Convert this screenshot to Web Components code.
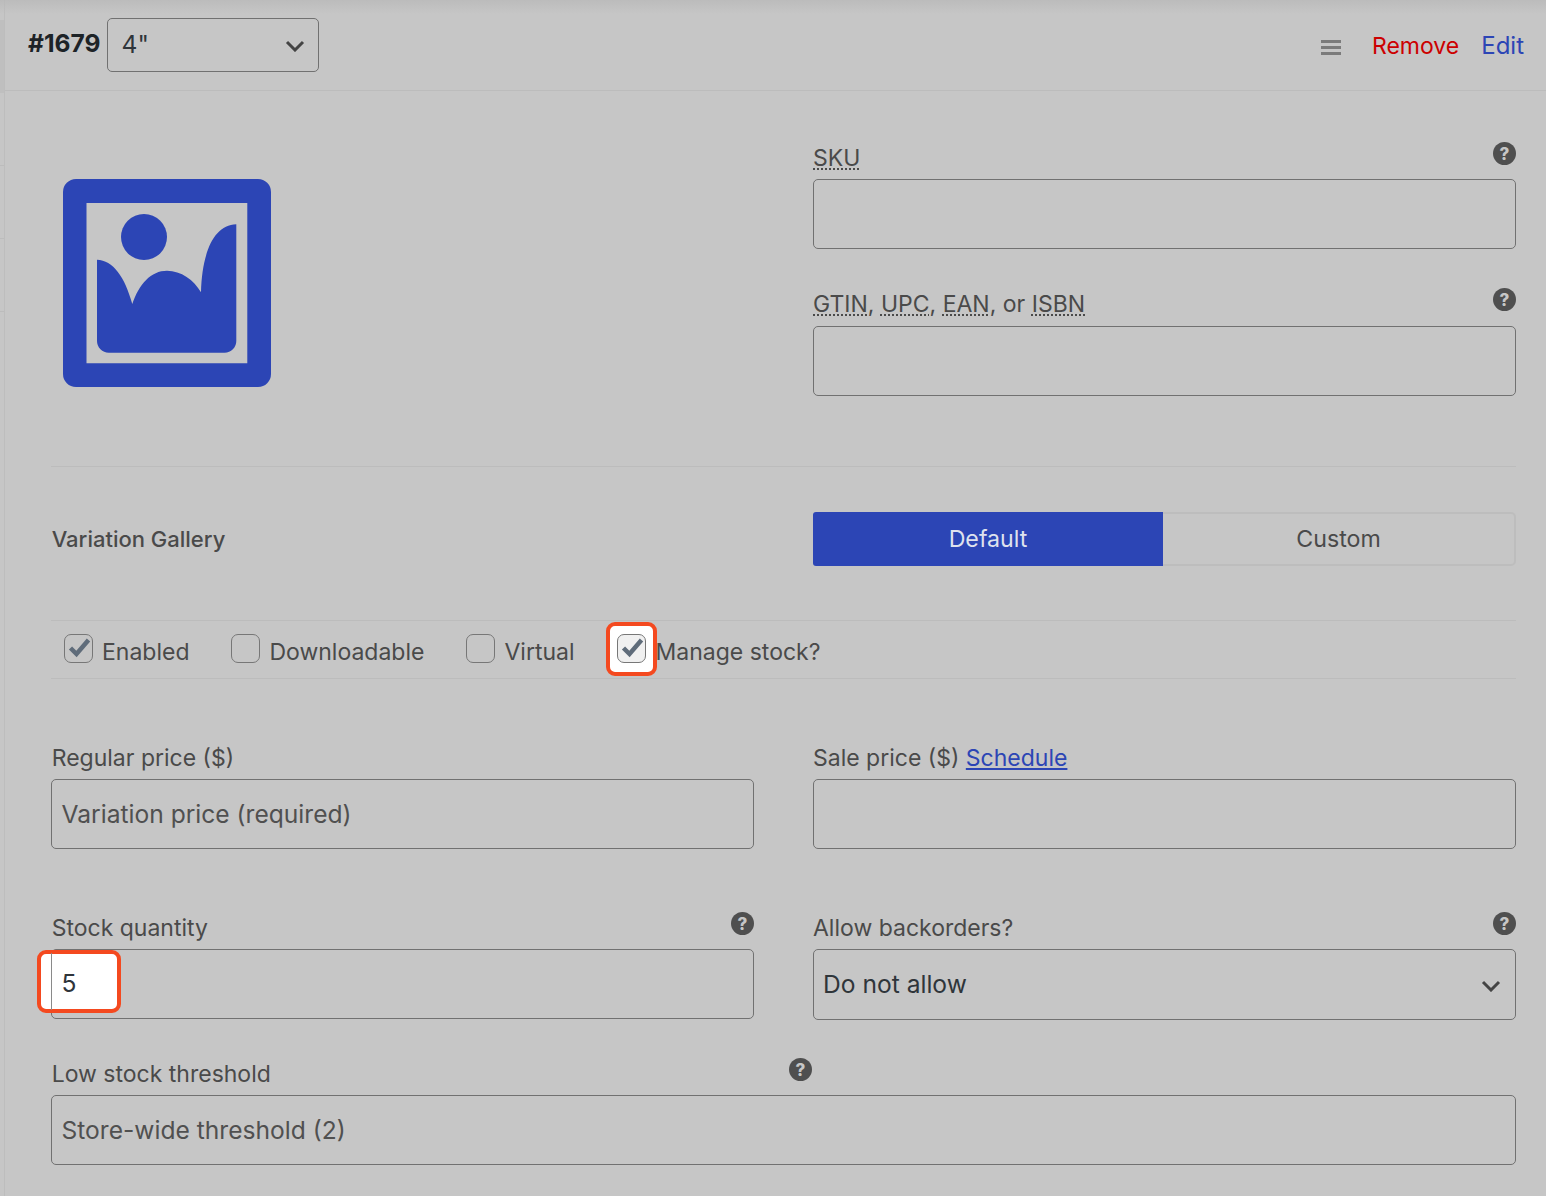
<!DOCTYPE html>
<html lang="en"><head><meta charset="utf-8"><title>Variation</title>
<style>
html,body{margin:0;padding:0;background:#c6c6c6}
body{font-family:Inter,"Noto Sans",sans-serif;font-size:23px;color:#4a4a4a;width:1546px;height:1196px;overflow:hidden}
</style></head><body>
<vg-app>
  <vg-header slot="header" num="#1679" value='4"'></vg-header>
  <vg-top slot="body"></vg-top>
  <vg-gallery slot="body"></vg-gallery>
  <vg-checks slot="body">
    <vg-check checked>Enabled</vg-check>
    <vg-check>Downloadable</vg-check>
    <vg-check>Virtual</vg-check>
    <vg-check checked highlight>Manage stock?</vg-check>
  </vg-checks>
  <vg-cols slot="body" style="margin-top:67px">
    <vg-field><span slot="label" style="margin-left:.7px">Regular price ($)</span><vg-input placeholder="Variation price (required)"></vg-input></vg-field>
    <vg-field><span slot="label">Sale price ($) <a href="#" style="color:#2c45b5;text-decoration:underline">Schedule</a></span><vg-input></vg-input></vg-field>
  </vg-cols>
  <vg-cols slot="body" style="margin-top:67px">
    <vg-field help><span slot="label" style="margin-left:.7px">Stock quantity</span><vg-input value="5" highlight></vg-input></vg-field>
    <vg-field help><span slot="label">Allow backorders?</span><vg-select tall value="Do not allow"></vg-select></vg-field>
  </vg-cols>
  <vg-field slot="body" help narrow style="margin-top:42px"><span slot="label" style="margin-left:.7px">Low stock threshold</span><vg-input placeholder="Store-wide threshold (2)"></vg-input></vg-field>
</vg-app>
<script>
const def=(name,html)=>customElements.define(name,class extends HTMLElement{
  constructor(){super();this.attachShadow({mode:'open'}).innerHTML=html(this)}
});
const chev='<svg width="20" height="12" viewBox="0 0 20 12" fill="none"><path d="M2 2l8 8 8-8" stroke="#444" stroke-width="3"/></svg>';

def('vg-help',()=>`<style>:host{display:block;width:23px;height:23px;flex:none}svg{display:block}
text{font:800 17px Inter,sans-serif;fill:#c6c6c6}</style>
<svg width="23" height="23" viewBox="0 0 23 23"><circle cx="11.5" cy="11.5" r="11.5" fill="#4f4f4f"/><text x="11.5" y="17.6" text-anchor="middle">?</text></svg>`);

def('vg-app',()=>`<style>
:host{display:flex;width:1546px;height:1196px;position:relative;background:#c6c6c6}
.rail{width:4px;flex:none;border-right:1px solid #bdbdbd;display:flex;flex-direction:column}
.rail i{display:block;height:73px;border-bottom:1px solid #bcbcbc;box-sizing:border-box}
.rail i.first{height:20px;border:0}.rail i.act{background:#bfbfbf;border:0}
.main{flex:1;min-width:0}
.body{padding:0 30px 0 46px}
.shade{position:absolute;left:0;right:0;top:0;height:14px;background:linear-gradient(#b9b9b9cc,#c6c6c600);pointer-events:none}
</style>
<div class="rail"><i class="first"></i><i class="act"></i><i></i><i></i><i></i></div>
<div class="main"><slot name="header"></slot><div class="body"><slot name="body"></slot></div></div>
<div class="shade"></div>`);

def('vg-header',h=>`<style>
:host{display:flex;align-items:center;height:90px;border-bottom:1px solid #bcbcbc;padding:0 22px 0 23px;box-sizing:content-box}
.num{font-weight:700;font-size:24.6px;color:#1d2327;margin-right:6px;position:relative;top:-2px}
.sp{flex:1}
.menu{display:flex;flex-direction:column;gap:3px;width:20px;margin-right:31px;margin-top:5px}
.menu i{display:block;height:3px;background:#7b7b7b}
.act{margin-top:1px}
.rm{color:#cc0000;margin-right:22px;font-size:23px}.ed{color:#2c45b5;font-size:24px}
vg-select{width:212px;margin-top:-1px}
</style>
<span class="num">${h.getAttribute('num')}</span><vg-select small value='${h.getAttribute('value')}'></vg-select>
<span class="sp"></span><span class="menu"><i></i><i></i><i></i></span>
<span class="act rm">Remove</span><span class="act ed">Edit</span>`);

def('vg-select',h=>{const sm=h.hasAttribute('small');return `<style>
:host{display:flex;align-items:center;justify-content:space-between;box-sizing:border-box;height:${sm?54:71}px;
border:1px solid #717171;border-radius:5px;padding:0 ${sm?13:14}px 0 ${sm?14:9}px;font-size:24.6px;color:#2f353a}
svg{display:block;margin-top:${sm?2:3}px}
span{position:relative;top:-1px}
</style><span>${h.getAttribute('value')}</span>${chev}`});

def('vg-input',h=>{const ph=h.getAttribute('placeholder'),v=h.getAttribute('value'),hl=h.hasAttribute('highlight');return `<style>
:host{display:flex;align-items:center;position:relative;box-sizing:border-box;height:70px;border:1px solid #717171;border-radius:5px;padding:0 9.5px;font-size:24.6px}
.ph{color:#505050}.v{color:#2f353a;position:relative;z-index:1;top:-1px}
.hl{position:absolute;left:-15px;top:0;width:84px;height:63px;box-sizing:border-box;background:#fff;border:4px solid #f4491f;border-radius:9px}
.hl::before{content:"";position:absolute;left:10px;top:-1px;bottom:-1px;width:1px;background:#8a8a8a}
</style>${hl?'<div class="hl"></div>':''}${v?`<span class="v">${v}</span>`:`<span class="ph">${ph||''}</span>`}`});

def('vg-field',h=>`<style>
:host{display:block}
.l{display:flex;justify-content:space-between;align-items:flex-start;height:var(--lh,33px);line-height:24px;${h.hasAttribute('narrow')?'width:761px;':''}}
vg-help{margin:-4px .5px 0 0}
</style><div class="l"><span><slot name="label"></slot></span>${h.hasAttribute('help')?'<vg-help></vg-help>':''}</div><slot></slot>`);

def('vg-cols',()=>`<style>:host{display:grid;grid-template-columns:703px 703px;column-gap:59px}</style><slot></slot>`);

def('vg-thumb',()=>`<style>:host{display:block;width:208px;height:208px}svg{display:block}</style>
<svg width="208" height="208" viewBox="0 0 208 208"><path fill="#2c45b5" fill-rule="evenodd" d="M13 0H195A13 13 0 0 1 208 13V195A13 13 0 0 1 195 208H13A13 13 0 0 1 0 195V13A13 13 0 0 1 13 0ZM23.5 24V184.3H184.3V24Z"/>
<circle cx="81" cy="58" r="23" fill="#2c45b5"/>
<path fill="#2c45b5" d="M34 80.7C50 81 62 98 69.3 125C76 105 88 91.7 104 91.7C118 91.7 131 101 138 113.3C139 75 150 46 173.3 45.3V162a11.7 11.7 0 0 1-11.7 11.7H45.7a11.7 11.7 0 0 1-11.7-11.7Z"/></svg>`);

def('vg-top',()=>`<style>
:host{display:grid;grid-template-columns:703px 703px;column-gap:59px;padding:55px 0 70px;border-bottom:1px solid #bcbcbc;height:250px;box-sizing:content-box}
vg-thumb{margin:33px 0 0 11.7px}
.r{display:flex;flex-direction:column;gap:43px}
abbr{text-decoration:underline dotted 1.5px;text-underline-offset:2px}
</style><vg-thumb></vg-thumb><div class="r">
<vg-field help><span slot="label"><abbr>SKU</abbr></span><vg-input></vg-input></vg-field>
<vg-field help style="--lh:34px"><span slot="label"><abbr>GTIN</abbr>, <abbr>UPC</abbr>, <abbr>EAN</abbr>, or <abbr>ISBN</abbr></span><vg-input></vg-input></vg-field>
</div>`);

def('vg-gallery',()=>`<style>
:host{display:grid;grid-template-columns:703px 703px;column-gap:59px;align-items:center;padding:45px 0 54px;height:54px;box-sizing:content-box;font-weight:500}
.lab{font-size:22px;margin-left:.7px}
.seg{display:grid;grid-template-columns:350px 353px;height:54px;text-align:center;line-height:54px;font-size:23.2px;font-weight:400}
.on{background:#2c45b5;color:#dfe2ee;border-radius:3px 0 0 3px}
.off{box-sizing:border-box;border:2px solid #bdbdbd;border-left:0;border-radius:0 5px 5px 0;line-height:50px}
</style><span class="lab">Variation Gallery</span><div class="seg"><div class="on">Default</div><div class="off">Custom</div></div>`);

def('vg-checks',()=>`<style>
:host{display:flex;gap:42px;align-items:center;height:57px;border-top:1px solid #bcbcbc;border-bottom:1px solid #bcbcbc;padding-left:13px}
</style><slot></slot>`);

def('vg-check',h=>{const c=h.hasAttribute('checked'),hl=h.hasAttribute('highlight');return `<style>
:host{display:flex;align-items:center;gap:${hl?10:9}px;position:relative;font-size:23px}
.box{position:relative;width:29px;height:29px;margin-top:-2px;box-sizing:border-box;border:1px solid #777;border-radius:7px;background:${hl?'#f0f0f0':'transparent'};z-index:1}
.box svg{position:absolute;left:2px;top:1px}
.hl{position:absolute;left:-10.5px;top:-13.5px;width:51px;height:54px;box-sizing:border-box;background:#fff;border:4px solid #f4491f;border-radius:9px}
.t{position:relative;top:2.5px}
</style>${hl?'<div class="hl"></div>':''}<span class="box">${c?'<svg width="24" height="24" viewBox="0 0 24 24" fill="none"><path d="M3.5 12l6 6L21.5 4" stroke="#5f6c7a" stroke-width="4.5"/></svg>':''}</span><span class="t"><slot></slot></span>`});
</script>
</body></html>
